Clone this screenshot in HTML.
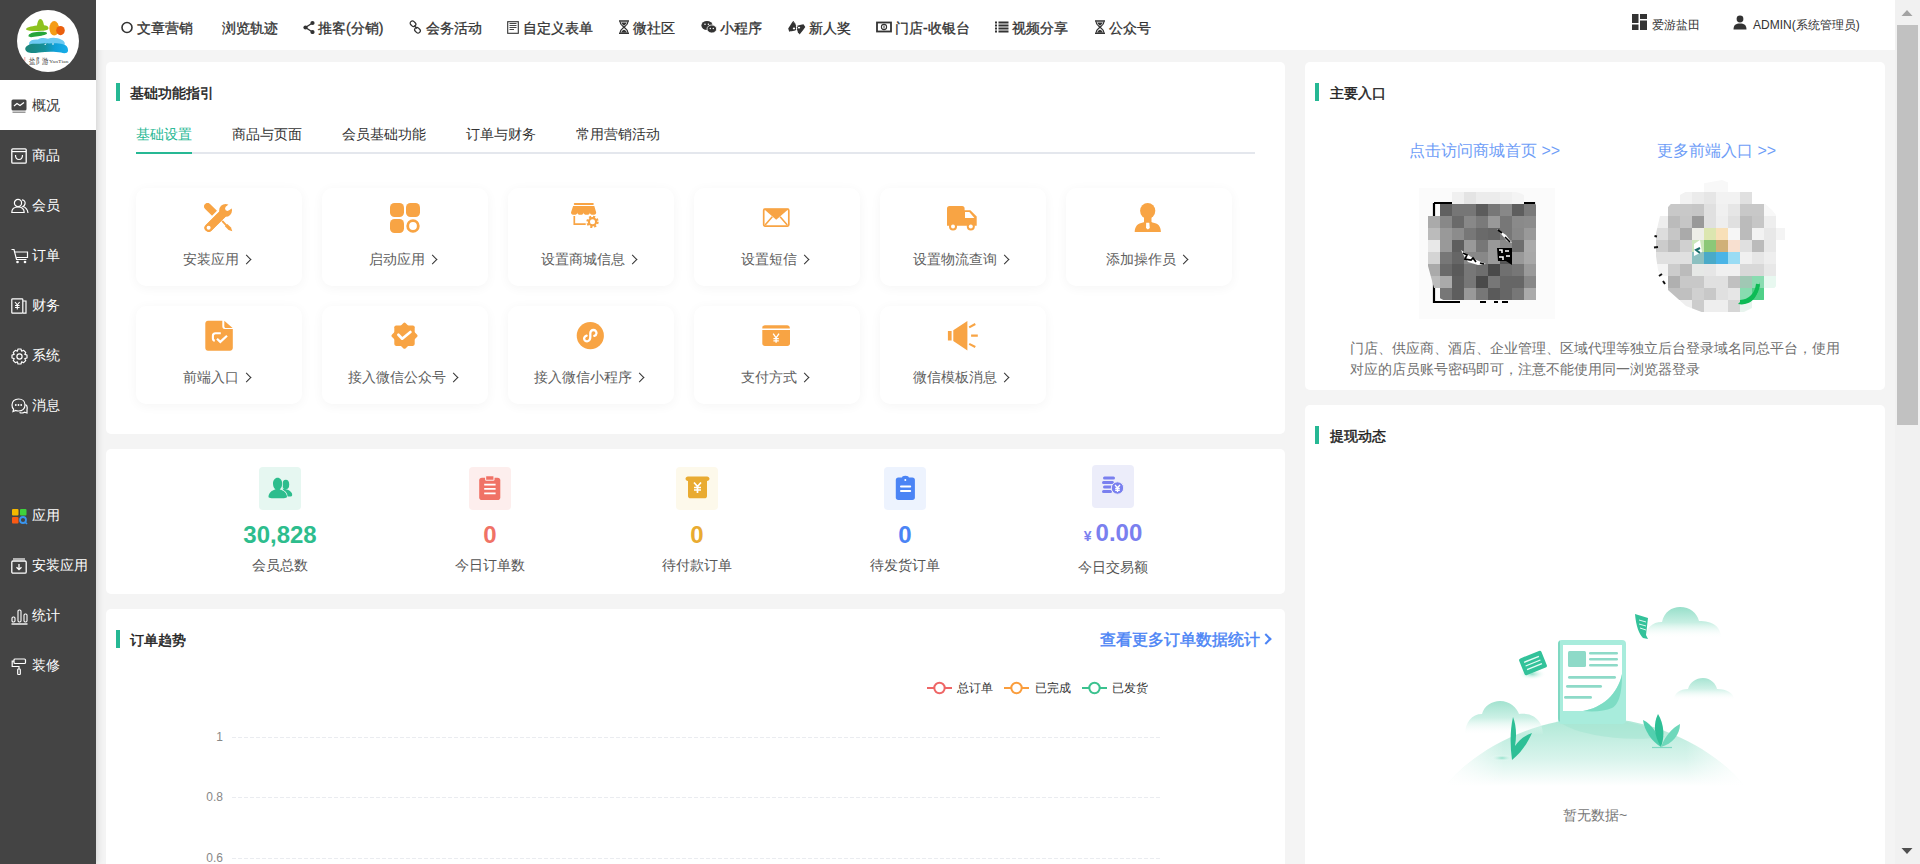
<!DOCTYPE html>
<html><head><meta charset="utf-8">
<style>
*{margin:0;padding:0;box-sizing:border-box}
html,body{width:1920px;height:864px;overflow:hidden;background:#f4f4f4;font-family:"Liberation Sans",sans-serif;color:#333}
.a{position:absolute}
#sb{position:absolute;left:0;top:0;width:96px;height:864px;background:#444;box-shadow:2px 0 6px rgba(0,0,0,.12);z-index:3}
#hd{position:absolute;left:96px;top:0;width:1799px;height:50px;background:#fff;z-index:4}
.mi{position:absolute;left:0;width:96px;height:50px;color:#fff;font-size:14px;line-height:50px}
.mi svg{position:absolute;left:11px;top:18px}
.mi span{position:absolute;left:32px;top:0}
.mi.on{background:#fff;color:#333}
.nv{position:absolute;top:0;height:50px;line-height:56px;font-size:14px;font-weight:normal;-webkit-text-stroke:0.3px #333;color:#333;white-space:nowrap}
.nv svg{position:absolute;top:21px}
.pn{position:absolute;background:#fff;border-radius:5px}
.ttl{position:absolute;font-size:14px;font-weight:normal;-webkit-text-stroke:0.45px #222;color:#222;line-height:18px;white-space:nowrap}
.bar{position:absolute;width:4px;height:18px;background:#26b894}
.card{position:absolute;width:166px;height:98px;background:#fff;border-radius:10px;box-shadow:0 2px 12px rgba(0,0,0,.045)}
.card svg{position:absolute;left:69px;top:15px}
.card .lb{position:absolute;left:0;right:6px;top:60px;text-align:center;font-size:14px;color:#606060;line-height:22px;white-space:nowrap}
.lb i{display:inline-block;width:7px;height:7px;border-right:1.6px solid #333;border-top:1.6px solid #333;transform:rotate(45deg);margin-left:4px;position:relative;top:-1px}
.tab{position:absolute;top:62px;font-size:14px;line-height:20px;white-space:nowrap}
.st{position:absolute;width:160px;text-align:center}
.st .ib{position:absolute;left:59px;top:0;width:42px;height:43px;border-radius:4px}
.st .num{position:absolute;left:0;right:0;top:53px;font-size:24px;font-weight:bold;line-height:30px}
.st .lab{position:absolute;left:0;right:0;top:88px;font-size:14px;color:#555;line-height:20px}
</style></head><body>

<div id="sb">
  <div class="a" style="left:17px;top:10px;width:62px;height:62px;border-radius:50%;background:#fff;overflow:hidden">
    <svg width="62" height="62" viewBox="0 0 62 62">
      <defs><linearGradient id="lg1" x1="0" y1="0" x2="1" y2="0"><stop offset="0" stop-color="#1d8579"/><stop offset=".45" stop-color="#16909a"/><stop offset=".7" stop-color="#10a0d8"/><stop offset="1" stop-color="#18aeea"/></linearGradient></defs>
      <path d="M9 19.5 C9 17.5 14 16.5 20 15.6 C20.5 12 21.5 9 23.3 9 C25.3 9 26.5 12 27 15.2 C29.5 15.5 31.5 16.2 31.5 18 C31.5 20 29 20.6 25 20.8 C19 21 12 21.5 9 19.5Z" fill="#8dc21f"/>
      <path d="M11.5 26 C11.5 23.5 16 22.2 22 21.8 C26 21.6 30 22 30 23.2 C30 24.5 26 25.5 21 26.3 C16 27.2 11.5 27.8 11.5 26Z" fill="#25a53a"/>
      <ellipse cx="37.2" cy="18.3" rx="4.8" ry="7.3" fill="#f59c16"/>
      <ellipse cx="43.5" cy="20.6" rx="4.3" ry="4.6" fill="#ea5f0e"/>
      <path d="M12 33 C13 30 17 29 21 29.5 C24 27.5 28 28 31 28.8 C35 27 41 27.5 45 30 C48 31.5 48.5 34 47 35.5 L12.5 35.8Z" fill="#6ccaf2"/>
      <path d="M8.2 39 C8.5 35.5 13 33.5 19 33.8 C24 34 28 33 32 33.5 C37 33 42 33.2 46 34.2 C50 35 51.2 38 51 41 C50.5 43.5 47 43.8 44 42.5 C38 41.5 30 41.5 22 42.5 C15 43.5 9 43.5 8.2 39Z" fill="url(#lg1)"/>
      <path d="M27 34.5 L29.5 33.2 L28.5 35Z M35 34.6 L36 32.8 L37 34.6Z" fill="#fff"/>
      <text x="12" y="53.5" font-size="8" fill="#2b2b2b" font-family="Liberation Serif" textLength="19.5" lengthAdjust="spacingAndGlyphs">盐阝游</text>
      <text x="32" y="53.2" font-size="5" fill="#444" font-family="Liberation Serif" textLength="19.5" lengthAdjust="spacingAndGlyphs">YanTian</text>
      <path d="M7.8 47 V51" stroke="#e66" stroke-width="1" opacity=".6"/>
    </svg>
  </div>
  <div class="mi on" style="top:80px"><svg width="16" height="16" viewBox="0 0 16 16"><rect x="0.5" y="1.5" width="15" height="11" rx="1.5" fill="#444"/><path d="M3 8 L6 5.5 L9 7.5 L13 4.5" stroke="#fff" stroke-width="1.2" fill="none"/><rect x="1.5" y="13.5" width="13" height="1.5" fill="#999"/></svg><span>概况</span></div>
  <div class="mi" style="top:130px"><svg width="16" height="16" viewBox="0 0 16 16"><rect x="0.8" y="0.8" width="14.4" height="14.4" rx="1" stroke="#fff" stroke-width="1.3" fill="none"/><path d="M1 3.6 H15" stroke="#fff" stroke-width="1.2"/><path d="M4.5 7 C4.5 13 11.5 13 11.5 7" stroke="#fff" stroke-width="1.2" fill="none"/></svg><span>商品</span></div>
  <div class="mi" style="top:180px"><svg width="18" height="16" viewBox="0 0 18 16"><circle cx="7" cy="5" r="3.6" stroke="#fff" stroke-width="1.2" fill="none"/><path d="M0.8 14.5 C0.8 10.5 3.5 9 7 9 C10.5 9 13.2 10.5 13.2 14.5 Z" stroke="#fff" stroke-width="1.2" fill="none"/><path d="M11 1.8 C13.5 2 14.5 4 14 6 C13.6 7.5 12.5 8.3 12 8.5 C14.5 9.3 16.5 11 17 15" stroke="#fff" stroke-width="1.2" fill="none"/></svg><span>会员</span></div>
  <div class="mi" style="top:230px"><svg width="18" height="16" viewBox="0 0 18 16"><path d="M0.5 1.5 H3 L5.5 11.5 H15.5" stroke="#fff" stroke-width="1.2" fill="none"/><path d="M4 4 H16.5 V9.5 H5.2" stroke="#fff" stroke-width="1.2" fill="none"/><circle cx="6.5" cy="14" r="1.3" fill="#fff"/><circle cx="14" cy="14" r="1.3" fill="#fff"/></svg><span>订单</span></div>
  <div class="mi" style="top:280px"><svg width="16" height="16" viewBox="0 0 16 16"><rect x="0.8" y="0.8" width="11" height="14.4" rx="0.8" stroke="#fff" stroke-width="1.2" fill="none"/><path d="M12 3 H15 V15.2 H12" stroke="#fff" stroke-width="1.2" fill="none"/><path d="M4 4 L6.3 6.8 L8.6 4 M6.3 6.8 V11.5 M4 7.5 H8.6 M4 9.5 H8.6" stroke="#fff" stroke-width="1.1" fill="none"/></svg><span>财务</span></div>
  <div class="mi" style="top:330px"><svg width="17" height="17" viewBox="0 0 17 17"><path d="M7 1 H10 L10.6 3.2 L12.6 2.3 L14.7 4.4 L13.8 6.4 L16 7 V10 L13.8 10.6 L14.7 12.6 L12.6 14.7 L10.6 13.8 L10 16 H7 L6.4 13.8 L4.4 14.7 L2.3 12.6 L3.2 10.6 L1 10 V7 L3.2 6.4 L2.3 4.4 L4.4 2.3 L6.4 3.2 Z" stroke="#fff" stroke-width="1.2" fill="none" stroke-linejoin="round"/><circle cx="8.5" cy="8.5" r="2.6" stroke="#fff" stroke-width="1.2" fill="none"/></svg><span>系统</span></div>
  <div class="mi" style="top:380px"><svg width="17" height="17" viewBox="0 0 17 17"><path d="M7.5 1 C11.5 1 14 3.5 14 7 C14 10.5 11.5 13 7.5 13 C6.5 13 5.5 12.8 4.8 12.5 L2 13.5 L2.6 11.2 C1.5 10.2 1 8.7 1 7 C1 3.5 3.5 1 7.5 1 Z" stroke="#fff" stroke-width="1.2" fill="none"/><circle cx="4.8" cy="7" r="0.9" fill="#fff"/><circle cx="7.5" cy="7" r="0.9" fill="#fff"/><circle cx="10.2" cy="7" r="0.9" fill="#fff"/><path d="M14.5 6.5 C16 7.5 16.5 9.5 16 11.5 L16 15 L13.5 14.2 C12 15 10 15.2 8.5 14.5" stroke="#fff" stroke-width="1.2" fill="none"/></svg><span>消息</span></div>
  <div class="mi" style="top:490px"><svg width="17" height="17" viewBox="0 0 17 17"><rect x="1" y="1" width="6.5" height="6.5" rx="1" fill="#f5b800"/><rect x="9" y="1" width="6.5" height="6.5" rx="1" fill="#3fd23c"/><rect x="1" y="9" width="6.5" height="6.5" rx="1" fill="#fa5a14"/><circle cx="12" cy="12" r="3" stroke="#3a96f0" stroke-width="1.8" fill="none"/><path d="M14 14 L16 16" stroke="#3a96f0" stroke-width="1.6"/></svg><span>应用</span></div>
  <div class="mi" style="top:540px"><svg width="16" height="16" viewBox="0 0 16 16"><rect x="0.8" y="3" width="14.4" height="12.2" rx="1.2" stroke="#fff" stroke-width="1.3" fill="none"/><path d="M2 1 H14" stroke="#fff" stroke-width="1.2"/><path d="M8 6 V11.5 M5.5 9.2 L8 11.7 L10.5 9.2" stroke="#fff" stroke-width="1.3" fill="none"/></svg><span>安装应用</span></div>
  <div class="mi" style="top:590px"><svg width="17" height="17" viewBox="0 0 17 17"><rect x="1" y="9" width="3" height="5" rx="1.2" stroke="#fff" stroke-width="1.1" fill="none"/><rect x="7" y="2" width="3" height="12" rx="1.2" stroke="#fff" stroke-width="1.1" fill="none"/><rect x="13" y="6" width="3" height="8" rx="1.2" stroke="#fff" stroke-width="1.1" fill="none"/><path d="M0.5 16 H16.5" stroke="#fff" stroke-width="1.4"/></svg><span>统计</span></div>
  <div class="mi" style="top:640px"><svg width="16" height="17" viewBox="0 0 16 17"><rect x="3" y="1" width="11.5" height="4.5" rx="1" stroke="#fff" stroke-width="1.2" fill="none"/><path d="M3 3.2 H1.2 V8.5 H8 V11" stroke="#fff" stroke-width="1.2" fill="none"/><rect x="6.7" y="11" width="2.6" height="5.5" rx="0.8" stroke="#fff" stroke-width="1.2" fill="none"/></svg><span>装修</span></div>
</div>

<div id="hd">
<div class="nv" style="left:41px">文章营销</div><svg class="a" style="left:25px;top:20px" width="12" height="14" viewBox="0 0 12 14"><circle cx="6" cy="7.5" r="5" stroke="#333" stroke-width="1.6" fill="none"/></svg>
<div class="nv" style="left:126px">浏览轨迹</div>
<div class="nv" style="left:222px">推客(分销)</div><svg class="a" style="left:207px;top:20px" width="12" height="14" viewBox="0 0 12 14"><circle cx="9.5" cy="3" r="2.1" fill="#333"/><circle cx="2.5" cy="7.5" r="2.1" fill="#333"/><circle cx="9.5" cy="12" r="2.1" fill="#333"/><path d="M9.5 3 L2.5 7.5 L9.5 12" stroke="#333" stroke-width="1.4" fill="none"/></svg>
<div class="nv" style="left:330px">会务活动</div><svg class="a" style="left:313px;top:20px" width="13" height="14" viewBox="0 0 13 14"><rect x="1" y="1.5" width="6" height="4.5" rx="2.2" transform="rotate(45 4 3.75)" stroke="#333" stroke-width="1.3" fill="none"/><rect x="5.5" y="8" width="6" height="4.5" rx="2.2" transform="rotate(45 8.5 10.25)" stroke="#333" stroke-width="1.3" fill="none"/><path d="M5 5.5 L8 8.5" stroke="#333" stroke-width="1.3"/></svg>
<div class="nv" style="left:427px">自定义表单</div><svg class="a" style="left:411px;top:20px" width="12" height="14" viewBox="0 0 12 14"><rect x="0.7" y="1.7" width="10.6" height="11.6" stroke="#333" stroke-width="1.1" fill="none"/><path d="M2.5 3.5 H9.5 M2.5 5.5 H9.5 M2.5 7.5 H9.5 M2.5 9.5 H7" stroke="#333" stroke-width="0.9"/></svg>
<div class="nv" style="left:537px">微社区</div><svg class="a" style="left:522px;top:20px" width="12" height="14" viewBox="0 0 12 14"><path d="M1 1 H11 M1 13.5 H11" stroke="#333" stroke-width="1.6"/><path d="M2 1.5 C2 5 5 6 6 7.2 C7 6 10 5 10 1.5 M2 13 C2 9 5 8.5 6 7.2 C7 8.5 10 9 10 13" stroke="#333" stroke-width="1.2" fill="none"/><path d="M3 12.8 C4 10.5 5.2 10 6 9.8 C6.8 10 8 10.5 9 12.8Z M3.2 2.5 H8.8 C8 4.5 6.8 5 6 5.8 C5.2 5 4 4.5 3.2 2.5Z" fill="#333"/></svg>
<div class="nv" style="left:624px">小程序</div><svg class="a" style="left:605px;top:20px" width="16" height="14" viewBox="0 0 16 14"><ellipse cx="6" cy="5.5" rx="5.6" ry="4.6" fill="#333"/><ellipse cx="10.8" cy="9" rx="4.8" ry="4" fill="#333" stroke="#fff" stroke-width="0.8"/><circle cx="4" cy="4.2" r="0.8" fill="#fff"/><circle cx="7.4" cy="4.2" r="0.8" fill="#fff"/><circle cx="9.3" cy="8.5" r="0.7" fill="#fff"/><circle cx="12.3" cy="8.5" r="0.7" fill="#fff"/></svg>
<div class="nv" style="left:713px">新人奖</div><svg class="a" style="left:691px;top:20px" width="19" height="15" viewBox="0 0 19 15"><path d="M1.2 8.6 C2.5 6.5 3.8 4.5 5 2.6 L6.2 1.1 L7 1.6 L6.6 2.6 L8 2.4 L7.8 3.6 L8.8 3.8 L8.5 5 L9.2 5.4 L8.8 6.6 L9.3 7.2 L8.9 8.6 L9.2 9.4 L8.3 10.4 C7 11 5 11 3.5 11.2 L2.2 11.8Z" fill="#333"/><path d="M18.3 7 C17.6 6 17 5 16.5 4.3 C15 4.6 13 4.9 11 5.4 L10.2 5.8 L10.6 6.8 L9.8 7.4 L10.4 8.4 L9.8 9.2 L10.5 10.2 L10.1 11 L11 11.8 L10.8 12.8 L12 13.4 L12.6 14.6 C13.8 13 15 11.5 16 10.2Z" fill="#333"/><ellipse cx="7" cy="8.4" rx="1.2" ry="0.9" fill="#fff"/><ellipse cx="12" cy="7.6" rx="1.2" ry="0.9" fill="#fff"/></svg>
<div class="nv" style="left:799px">门店-收银台</div><svg class="a" style="left:780px;top:20px" width="16" height="14" viewBox="0 0 16 14"><rect x="1" y="2.5" width="14" height="9" stroke="#333" stroke-width="1.8" fill="none"/><circle cx="8" cy="7" r="2.6" stroke="#333" stroke-width="1.1" fill="none"/><path d="M8 5.5 V8.5" stroke="#333" stroke-width="1"/></svg>
<div class="nv" style="left:916px">视频分享</div><svg class="a" style="left:899px;top:20px" width="14" height="14" viewBox="0 0 14 14"><path d="M0 2.5 H2 M0 5.5 H2 M0 8.5 H2 M0 11.5 H2 M3.5 2.5 H13.5 M3.5 5.5 H13.5 M3.5 8.5 H13.5 M3.5 11.5 H13.5" stroke="#333" stroke-width="1.9"/></svg>
<div class="nv" style="left:1013px">公众号</div><svg class="a" style="left:998px;top:20px" width="12" height="14" viewBox="0 0 12 14"><path d="M1 1 H11 M1 13.5 H11" stroke="#333" stroke-width="1.6"/><path d="M2 1.5 C2 5 5 6 6 7.2 C7 6 10 5 10 1.5 M2 13 C2 9 5 8.5 6 7.2 C7 8.5 10 9 10 13" stroke="#333" stroke-width="1.2" fill="none"/><path d="M3 12.8 C4 10.5 5.2 10 6 9.8 C6.8 10 8 10.5 9 12.8Z M3.2 2.5 H8.8 C8 4.5 6.8 5 6 5.8 C5.2 5 4 4.5 3.2 2.5Z" fill="#333"/></svg>
<svg class="a" style="left:1536px;top:14px" width="15" height="16" viewBox="0 0 15 16"><rect x="0" y="0" width="6.5" height="9" fill="#333"/><rect x="0" y="10.5" width="6.5" height="5.5" fill="#333"/><rect x="8" y="0" width="7" height="5" fill="#333"/><rect x="8" y="6.5" width="7" height="9.5" fill="#333"/></svg>
<div class="a" style="left:1556px;top:0;line-height:50px;font-size:12px;color:#333">爱游盐田</div>
<svg class="a" style="left:1637px;top:15px" width="14" height="15" viewBox="0 0 14 15"><circle cx="7" cy="4" r="3.4" fill="#333"/><path d="M0.5 14.5 C0.5 10 3 8.5 7 8.5 C11 8.5 13.5 10 13.5 14.5Z" fill="#333"/></svg>
<div class="a" style="left:1657px;top:0;line-height:50px;font-size:12px;color:#333">ADMIN(系统管理员)</div>
</div>

<!-- left panel 1 -->
<div class="pn" style="left:106px;top:62px;width:1179px;height:372px">
  <div class="bar" style="left:10px;top:21px"></div>
  <div class="ttl" style="left:24px;top:22px">基础功能指引</div>
  <div class="tab" style="left:30px;color:#26b894">基础设置</div>
  <div class="tab" style="left:126px;color:#333">商品与页面</div>
  <div class="tab" style="left:236px;color:#333">会员基础功能</div>
  <div class="tab" style="left:360px;color:#333">订单与财务</div>
  <div class="tab" style="left:470px;color:#333">常用营销活动</div>
  <div class="a" style="left:30px;top:90px;width:1119px;height:2px;background:#e4e7ed"></div>
  <div class="a" style="left:30px;top:90px;width:56px;height:2px;background:#26b894"></div>
  <div class="card" style="left:30px;top:126px"><svg class="a" style="left:68px;top:15px" width="30" height="30" viewBox="0 0 30 30"><path d="M6.06 1.01 L12.96 7.81 L8.04 12.79 L1.14 5.99 A3.5 3.5 0 0 1 6.06 1.01Z" fill="#f8a444"/><path d="M18.4 18.2 L22.6 22.6" stroke="#f8a444" stroke-width="1.9" stroke-linecap="round"/><path d="M20.9 23.3 L23.3 20.9 L27 24.4 L28.3 28.2 L24.6 27Z" fill="#f8a444"/><g stroke="#fff" stroke-width="1.1" paint-order="stroke"><path d="M1.79 21.95 L16.19 7.75 L21.81 13.45 L7.41 27.65 A4 4 0 0 1 1.79 21.95Z" fill="#f8a444"/></g><circle cx="21.6" cy="7.4" r="6.4" fill="#f8a444"/><path d="M1.79 21.95 L16.19 7.75 L21.81 13.45 L7.41 27.65 A4 4 0 0 1 1.79 21.95Z" fill="#f8a444"/><circle cx="23.4" cy="5.6" r="2.3" fill="#fff"/><path d="M21.8 4 L25.6 0.2 L29.6 4.2 L25 7.2Z" fill="#fff"/><circle cx="4.6" cy="24.7" r="2" fill="#fff"/></svg><div class="lb">安装应用<i></i></div></div>
  <div class="card" style="left:216px;top:126px"><svg class="a" style="left:68px;top:15px" width="30" height="30" viewBox="0 0 30 30"><rect x="0" y="0" width="14" height="14" rx="4.5" fill="#f8a444"/><rect x="16" y="0" width="14" height="14" rx="4.5" fill="#f8a444"/><rect x="0" y="16" width="14" height="14" rx="4.5" fill="#f8a444"/><circle cx="23" cy="23" r="5.3" stroke="#f8a444" stroke-width="2.8" fill="none"/></svg><div class="lb">启动应用<i></i></div></div>
  <div class="card" style="left:402px;top:126px"><svg class="a" style="left:62px;top:14px" width="30" height="30" viewBox="0 0 30 30"><rect x="3.8" y="1" width="20" height="1.9" rx="0.9" fill="#f8a444"/><path d="M3.1 4.1 H24.3 L26.2 10.5 A3.15 2.3 0 0 1 19.9 10.5 A3.15 2.3 0 0 1 13.6 10.5 A3.15 2.3 0 0 1 7.3 10.5 A3.15 2.3 0 0 1 1 10.5Z" fill="#f8a444"/><path d="M4.3 14 V22.1 H15.7" stroke="#f8a444" stroke-width="1.7" fill="none"/><circle cx="22.5" cy="19.8" r="4.7" fill="#f8a444"/><circle cx="22.5" cy="19.8" r="5.1" stroke="#f8a444" stroke-width="2.2" stroke-dasharray="2.1 1.9" fill="none"/><circle cx="22.5" cy="19.8" r="2.5" fill="#fff"/></svg><div class="lb">设置商城信息<i></i></div></div>
  <div class="card" style="left:588px;top:126px"><svg class="a" style="left:68px;top:20px" width="29" height="20" viewBox="0 0 29 20"><rect x="1.7" y="1.1" width="25.1" height="17" rx="1.3" stroke="#f8a444" stroke-width="1.7" fill="none"/><path d="M1.5 0.8 H27 L14.2 11.8Z" fill="#f8a444"/><path d="M3.1 17 L10.3 8.8 M25.3 17 L18.1 8.8" stroke="#f8a444" stroke-width="1.6"/></svg><div class="lb">设置短信<i></i></div></div>
  <div class="card" style="left:774px;top:126px"><svg class="a" style="left:66px;top:17px" width="32" height="26" viewBox="0 0 32 26"><path d="M1 20.7 V3.6 A2.5 2.5 0 0 1 3.5 1.1 H16.1 A2.5 2.5 0 0 1 18.6 3.6 V5.3 H24.4 L30.7 11.5 V20.7Z" fill="#f8a444"/><path d="M19 7.1 H23.3 L28.4 13 H19Z" fill="#fff"/><circle cx="7" cy="21.4" r="4" fill="#f8a444"/><circle cx="7" cy="21.4" r="2" fill="#fff"/><circle cx="24.8" cy="21.4" r="4" fill="#f8a444"/><circle cx="24.8" cy="21.4" r="2" fill="#fff"/></svg><div class="lb">设置物流查询<i></i></div></div>
  <div class="card" style="left:960px;top:126px"><svg class="a" style="left:67px;top:14px" width="30" height="32" viewBox="0 0 30 32"><ellipse cx="14.7" cy="8.8" rx="7.6" ry="7.9" fill="#f8a444"/><path d="M11 14 H18.5 V21 H11Z" fill="#f8a444"/><path d="M1.7 30.1 C1.7 24 5 21.2 10 20.4 L12 19.8 H17.5 L19.5 20.4 C25 21.2 27.9 24 27.9 30.1Z" fill="#f8a444"/><path d="M13.2 20.8 H16.3 L16.8 26 L14.9 27.4 L13 26Z" fill="#fff"/></svg><div class="lb">添加操作员<i></i></div></div>
  <div class="card" style="left:30px;top:244px"><svg class="a" style="left:69px;top:14px" width="29" height="32" viewBox="0 0 29 32"><path d="M3 0.8 H17.3 V6 C17.3 7.8 18 9.1 19.8 9.1 H27.8 V28 C27.8 29.5 26.5 30.7 25 30.7 H3 C1.5 30.7 0.3 29.5 0.3 28 V3.5 C0.3 2 1.5 0.8 3 0.8Z" fill="#f8a444"/><path d="M19.3 0.8 L27.6 7.9 H20.8 C20 7.9 19.3 7.2 19.3 6.4Z" fill="#f8a444"/><path d="M15.8 13.2 H10.5 C8.8 13.2 7.9 14.2 7.9 15.8 V18.5 C7.9 19.8 8.5 20.6 9.8 20.8" stroke="#fff" stroke-width="2.1" fill="none"/><path d="M12 18.8 L15.3 21.9 L22 15.7" stroke="#fff" stroke-width="2.2" fill="none"/></svg><div class="lb">前端入口<i></i></div></div>
  <div class="card" style="left:216px;top:244px"><svg class="a" style="left:68px;top:16px" width="30" height="30" viewBox="0 0 30 30"><rect x="4.3" y="3.5" width="20.4" height="20.4" rx="1.8" fill="#f8a444"/><rect x="4.8" y="4" width="19.4" height="19.4" rx="1.8" transform="rotate(45 14.5 13.7)" fill="#f8a444"/><path d="M8.4 12.8 L12.2 16.7 L20.4 10" stroke="#fff" stroke-width="2.7" fill="none" stroke-linecap="round" stroke-linejoin="round"/></svg><div class="lb">接入微信公众号<i></i></div></div>
  <div class="card" style="left:402px;top:244px"><svg class="a" style="left:68px;top:16px" width="28" height="28" viewBox="0 0 28 28"><circle cx="14.3" cy="13.7" r="13.6" fill="#f8a444"/><path d="M10.6 13.6 C8.4 14.3 7.5 16.3 8.5 18 C9.6 19.8 12.5 19.8 13.6 17.8 C14.2 16.8 14.3 16 14.3 15 V11.2 C14.3 9.4 15.7 8 17.4 8 C19.3 8 20.6 9.5 20.5 11.2 C20.4 12.6 19.5 13.5 18.3 13.9" stroke="#fff" stroke-width="2.3" fill="none" stroke-linecap="round"/></svg><div class="lb">接入微信小程序<i></i></div></div>
  <div class="card" style="left:588px;top:244px"><svg class="a" style="left:68px;top:19px" width="29" height="22" viewBox="0 0 29 22"><path d="M0.3 3.6 V2.7 C0.3 1.2 1.5 0.2 3 0.2 H25.1 C26.6 0.2 27.8 1.2 27.8 2.7 V3.6Z" fill="#f8a444"/><path d="M0.3 5.1 H28 V18.4 C28 19.8 26.8 20.9 25.4 20.9 H2.9 C1.5 20.9 0.3 19.8 0.3 18.4Z" fill="#f8a444"/><path d="M11.2 8.7 L14.1 12.9 L17 8.7 M14.1 12.9 V17.7 M11.4 13.6 H16.8 M11.4 15.8 H16.8" stroke="#fff" stroke-width="1.35" fill="none"/></svg><div class="lb">支付方式<i></i></div></div>
  <div class="card" style="left:774px;top:244px"><svg class="a" style="left:66px;top:14px" width="33" height="32" viewBox="0 0 33 32"><rect x="1.9" y="11" width="3.7" height="9.5" fill="#f8a444"/><path d="M7.3 10.3 L21.4 1 V30.4 L7.3 20.9Z" fill="#f8a444"/><path d="M23.2 7.3 L29.3 4 M25.1 15.6 H31.8 M23.2 23.9 L29.3 27" stroke="#f8a444" stroke-width="2.1"/></svg><div class="lb">微信模板消息<i></i></div></div>
</div>
<!-- stats -->
<div class="pn" style="left:106px;top:449px;width:1179px;height:145px">
  <div class="st" style="left:94px;top:18px;height:130px"><div class="ib" style="background:#e6f7f1"><svg class="a" style="left:9px;top:9px" width="26" height="24" viewBox="0 0 26 24"><ellipse cx="17.8" cy="8.4" rx="3.4" ry="4.7" fill="#2dbd8d"/><path d="M14.5 12.6 C19.5 13.2 24.2 15.3 24.2 19 C24.2 20.2 23.2 20.6 21.5 20.6 L18.5 20.6Z" fill="#2dbd8d"/><g stroke="#e6f7f1" stroke-width="1.3" paint-order="stroke"><path d="M0.5 21 C0.5 16.5 4 14.2 7.5 13.4 C5.8 12.3 5 10 5 7.6 C5 4.2 7 1.8 9.6 1.8 C12.2 1.8 14.2 4.2 14.2 7.6 C14.2 10 13.4 12.3 11.7 13.4 C15.5 14.2 19 16.5 19 21 C19 22 17 22.3 9.7 22.3 C2.5 22.3 0.5 22 0.5 21Z" fill="#2dbd8d"/></g></svg></div><div class="num" style="color:#2dbd8d">30,828</div><div class="lab" style="">会员总数</div></div>
  <div class="st" style="left:304px;top:18px;height:130px"><div class="ib" style="background:#fdeeed"><svg class="a" style="left:10px;top:8px" width="22" height="26" viewBox="0 0 22 26"><rect x="0.2" y="2.7" width="21.1" height="22.4" rx="2.8" fill="#f07266"/><rect x="6.6" y="0.6" width="8.4" height="4.6" rx="0.8" fill="#f07266" stroke="#fdeeed" stroke-width="1.1"/><path d="M5.2 9.7 H16.6 M5.2 13.9 H16.6 M5.2 18.3 H16.6" stroke="#fff" stroke-width="1.7"/></svg></div><div class="num" style="color:#f07266">0</div><div class="lab" style="">今日订单数</div></div>
  <div class="st" style="left:511px;top:18px;height:130px"><div class="ib" style="background:#fdf9eb"><svg class="a" style="left:9px;top:9px" width="25" height="23" viewBox="0 0 25 23"><path d="M3 0.5 H22 C23.5 0.5 24.5 1.5 24.5 2.8 C24.5 4 23.5 5 22 5 V20 C22 21.5 21 22.3 19.5 22.3 H5.5 C4 22.3 3 21.5 3 20 V5 C1.5 5 0.5 4 0.5 2.8 C0.5 1.5 1.5 0.5 3 0.5Z" fill="#e9ab31"/><path d="M9 6.5 L12.5 10.5 L16 6.5 M12.5 10.5 V17 M9 11.5 H16 M9 14 H16" stroke="#fff" stroke-width="1.7" fill="none"/></svg></div><div class="num" style="color:#e9ab31">0</div><div class="lab" style="">待付款订单</div></div>
  <div class="st" style="left:719px;top:18px;height:130px"><div class="ib" style="background:#edf3fe"><svg class="a" style="left:10px;top:8px" width="22" height="26" viewBox="0 0 22 26"><rect x="1.8" y="2.4" width="19.1" height="22.5" rx="2.6" fill="#4b84f5"/><ellipse cx="11.4" cy="3" rx="3.5" ry="2.2" fill="#4b84f5"/><circle cx="11.3" cy="4.9" r="1" fill="#fff"/><path d="M7 11.4 H16.2 M7 15.9 H16.2" stroke="#fff" stroke-width="2" stroke-linecap="round"/></svg></div><div class="num" style="color:#4b84f5">0</div><div class="lab" style="">待发货订单</div></div>
  <div class="st" style="left:927px;top:16px;height:130px"><div class="ib" style="background:#ecedfa"><svg class="a" style="left:9px;top:9px" width="24" height="22" viewBox="0 0 24 22"><rect x="2" y="2.5" width="12" height="3" rx="1.5" fill="#7a80ef"/><rect x="1" y="7" width="12" height="3" rx="1.5" fill="#7a80ef"/><rect x="2" y="11.5" width="9" height="3" rx="1.5" fill="#7a80ef"/><rect x="1" y="16" width="10" height="3" rx="1.5" fill="#7a80ef"/><circle cx="16.5" cy="14" r="6.2" fill="#7a80ef" stroke="#ecedfa" stroke-width="1"/><path d="M14 11 L16.5 13.8 L19 11 M16.5 13.8 V18 M14.2 14.5 H18.8 M14.2 16.3 H18.8" stroke="#fff" stroke-width="1.3" fill="none"/></svg></div><div class="num" style="color:#7a80ef"><span style="font-size:14px;margin-right:4px">¥</span>0.00</div><div class="lab" style="top:92px">今日交易额</div></div>
</div>
<!-- trend -->
<div class="pn" style="left:106px;top:609px;width:1179px;height:300px">
  <div class="bar" style="left:10px;top:21px"></div>
  <div class="ttl" style="left:24px;top:22px">订单趋势</div>
  <div class="a" style="left:994px;top:20px;font-size:16px;font-weight:normal;-webkit-text-stroke:0.45px #4b84f5;color:#4b84f5;line-height:22px;white-space:nowrap">查看更多订单数据统计<i style="display:inline-block;width:8px;height:8px;border-right:2.2px solid #4b84f5;border-top:2.2px solid #4b84f5;transform:rotate(45deg);margin-left:2px;position:relative;top:-2px"></i></div>
  <svg class="a" style="left:821px;top:72px" width="25" height="14" viewBox="0 0 25 14"><path d="M0 7 H25" stroke="#ee6666" stroke-width="2"/><circle cx="12.5" cy="7" r="5.2" fill="#fff" stroke="#ee6666" stroke-width="2"/></svg>
  <div class="a" style="left:851px;top:70px;font-size:12px;line-height:18px;color:#333">总订单</div>
  <svg class="a" style="left:898px;top:72px" width="25" height="14" viewBox="0 0 25 14"><path d="M0 7 H25" stroke="#fa9d3c" stroke-width="2"/><circle cx="12.5" cy="7" r="5.2" fill="#fff" stroke="#fa9d3c" stroke-width="2"/></svg>
  <div class="a" style="left:929px;top:70px;font-size:12px;line-height:18px;color:#333">已完成</div>
  <svg class="a" style="left:976px;top:72px" width="25" height="14" viewBox="0 0 25 14"><path d="M0 7 H25" stroke="#3bc28f" stroke-width="2"/><circle cx="12.5" cy="7" r="5.2" fill="#fff" stroke="#3bc28f" stroke-width="2"/></svg>
  <div class="a" style="left:1006px;top:70px;font-size:12px;line-height:18px;color:#333">已发货</div>
  <div class="a" style="left:54px;width:63px;text-align:right;top:120px;font-size:12px;line-height:16px;color:#888">1</div>
  <div class="a" style="left:126px;top:128px;width:928px;height:1px;background:repeating-linear-gradient(90deg,#eaecf0 0 4px,transparent 4px 6px)"></div>
  <div class="a" style="left:54px;width:63px;text-align:right;top:180px;font-size:12px;line-height:16px;color:#888">0.8</div>
  <div class="a" style="left:126px;top:188px;width:928px;height:1px;background:repeating-linear-gradient(90deg,#eaecf0 0 4px,transparent 4px 6px)"></div>
  <div class="a" style="left:54px;width:63px;text-align:right;top:241px;font-size:12px;line-height:16px;color:#888">0.6</div>
  <div class="a" style="left:126px;top:249px;width:928px;height:1px;background:repeating-linear-gradient(90deg,#eaecf0 0 4px,transparent 4px 6px)"></div>
</div>
<!-- right 1 -->
<div class="pn" style="left:1305px;top:62px;width:580px;height:328px">
  <div class="bar" style="left:10px;top:21px"></div>
  <div class="ttl" style="left:25px;top:22px">主要入口</div>
  <div class="a" style="left:104px;top:78px;font-size:16px;line-height:22px;color:#6e9df7;white-space:nowrap">点击访问商城首页 &gt;&gt;</div>
  <div class="a" style="left:352px;top:78px;font-size:16px;line-height:22px;color:#6e9df7;white-space:nowrap">更多前端入口 &gt;&gt;</div>
<div class="a" style="left:114px;top:126px;width:136px;height:131px;background:#fbfbfb"></div>
<svg class="a" style="left:115px;top:124px" width="124" height="124" viewBox="-8 -6 124 124">
<path d="M6 11 V110 H32 M6 11 H24 M84 11 H106 V24 M52 110 H58 M66 110 H70 M74 110 H80" stroke="#000" stroke-width="2.2" fill="none"/>
<g clip-path="url(#qc1)"><rect x="24" y="0" width="12" height="12" fill="#f0f0f0"/><rect x="36" y="0" width="12" height="12" fill="#e4e4e4"/><rect x="48" y="0" width="12" height="12" fill="#ececec"/><rect x="60" y="0" width="12" height="12" fill="#ececec"/><rect x="72" y="0" width="12" height="12" fill="#f0f0f0"/><rect x="84" y="0" width="12" height="12" fill="#f4f4f4"/><rect x="12" y="12" width="12" height="12" fill="#606060"/><rect x="24" y="12" width="12" height="12" fill="#767676"/><rect x="36" y="12" width="12" height="12" fill="#767676"/><rect x="48" y="12" width="12" height="12" fill="#5c5c5c"/><rect x="60" y="12" width="12" height="12" fill="#777777"/><rect x="72" y="12" width="12" height="12" fill="#888888"/><rect x="84" y="12" width="12" height="12" fill="#5e5e5e"/><rect x="96" y="12" width="12" height="12" fill="#7a7a7a"/><rect x="0" y="24" width="12" height="12" fill="#aaaaaa"/><rect x="12" y="24" width="12" height="12" fill="#888888"/><rect x="24" y="24" width="12" height="12" fill="#6a6a6a"/><rect x="36" y="24" width="12" height="12" fill="#888888"/><rect x="48" y="24" width="12" height="12" fill="#7a7a7a"/><rect x="60" y="24" width="12" height="12" fill="#999999"/><rect x="72" y="24" width="12" height="12" fill="#777777"/><rect x="84" y="24" width="12" height="12" fill="#8a8a8a"/><rect x="96" y="24" width="12" height="12" fill="#8c8c8c"/><rect x="0" y="36" width="12" height="12" fill="#bbbbbb"/><rect x="12" y="36" width="12" height="12" fill="#999999"/><rect x="24" y="36" width="12" height="12" fill="#8c8c8c"/><rect x="36" y="36" width="12" height="12" fill="#777777"/><rect x="48" y="36" width="12" height="12" fill="#6a6a6a"/><rect x="60" y="36" width="12" height="12" fill="#666666"/><rect x="72" y="36" width="12" height="12" fill="#777777"/><rect x="84" y="36" width="12" height="12" fill="#888888"/><rect x="96" y="36" width="12" height="12" fill="#999999"/><rect x="0" y="48" width="12" height="12" fill="#e8e8e8"/><rect x="12" y="48" width="12" height="12" fill="#999999"/><rect x="24" y="48" width="12" height="12" fill="#5e5e5e"/><rect x="36" y="48" width="12" height="12" fill="#999999"/><rect x="48" y="48" width="12" height="12" fill="#777777"/><rect x="60" y="48" width="12" height="12" fill="#999999"/><rect x="72" y="48" width="12" height="12" fill="#888888"/><rect x="84" y="48" width="12" height="12" fill="#6e6e6e"/><rect x="96" y="48" width="12" height="12" fill="#aaaaaa"/><rect x="0" y="60" width="12" height="12" fill="#d4d4d4"/><rect x="12" y="60" width="12" height="12" fill="#777777"/><rect x="24" y="60" width="12" height="12" fill="#666666"/><rect x="36" y="60" width="12" height="12" fill="#888888"/><rect x="48" y="60" width="12" height="12" fill="#888888"/><rect x="60" y="60" width="12" height="12" fill="#999999"/><rect x="72" y="60" width="12" height="12" fill="#555555"/><rect x="84" y="60" width="12" height="12" fill="#999999"/><rect x="96" y="60" width="12" height="12" fill="#a8a8a8"/><rect x="0" y="72" width="12" height="12" fill="#aaaaaa"/><rect x="12" y="72" width="12" height="12" fill="#6a6a6a"/><rect x="24" y="72" width="12" height="12" fill="#5a5a5a"/><rect x="36" y="72" width="12" height="12" fill="#777777"/><rect x="48" y="72" width="12" height="12" fill="#6e6e6e"/><rect x="60" y="72" width="12" height="12" fill="#4a4a4a"/><rect x="72" y="72" width="12" height="12" fill="#707070"/><rect x="84" y="72" width="12" height="12" fill="#777777"/><rect x="96" y="72" width="12" height="12" fill="#9a9a9a"/><rect x="0" y="84" width="12" height="12" fill="#bbbbbb"/><rect x="12" y="84" width="12" height="12" fill="#aaaaaa"/><rect x="24" y="84" width="12" height="12" fill="#5e5e5e"/><rect x="36" y="84" width="12" height="12" fill="#777777"/><rect x="48" y="84" width="12" height="12" fill="#4a4a4a"/><rect x="60" y="84" width="12" height="12" fill="#777777"/><rect x="72" y="84" width="12" height="12" fill="#666666"/><rect x="84" y="84" width="12" height="12" fill="#666666"/><rect x="96" y="84" width="12" height="12" fill="#888888"/><rect x="12" y="96" width="12" height="12" fill="#777777"/><rect x="24" y="96" width="12" height="12" fill="#5e5e5e"/><rect x="36" y="96" width="12" height="12" fill="#999999"/><rect x="48" y="96" width="12" height="12" fill="#777777"/><rect x="60" y="96" width="12" height="12" fill="#5a5a5a"/><rect x="72" y="96" width="12" height="12" fill="#666666"/><rect x="84" y="96" width="12" height="12" fill="#777777"/><rect x="96" y="96" width="12" height="12" fill="#aaaaaa"/></g>
<clipPath id="qc1"><path d="M24 0 H88 C96 2 102 6 104 10 L110 14 V108 C106 112 100 110 96 110 H22 C14 108 8 106 6 96 L0 74 V10 C2 8 8 6 12 12Z"/></clipPath>
<path d="M33 58 L46 67 L58 72 L50 73 L40 70 L36 64Z" fill="#fff"/><path d="M35 61 L39 63 L37 67 L43 68 L45 66 L48 70 M52 71 L56 72" stroke="#000" stroke-width="1.7" fill="none"/>
<path d="M69 37 L78 43 L84 51 L79 49Z" fill="#fff"/><path d="M70 38 L74 41 M77 45 L82 50" stroke="#000" stroke-width="1.6"/>
<path d="M69 56 H84 V73 L78 69 H70Z" fill="#000"/><path d="M71 58 H74 V61 M77 59 H81 M71 65 H75 V68 M78 64 H82" stroke="#fff" stroke-width="1.5"/>
</svg>
<svg class="a" style="left:340px;top:118px" width="140" height="140" viewBox="-11 0 140 140">
<g clip-path="url(#qc2)"><rect x="48" y="0" width="12" height="12" fill="#f8f8f8"/><rect x="60" y="0" width="12" height="12" fill="#f8f8f8"/><rect x="24" y="12" width="12" height="12" fill="#f2f2f2"/><rect x="36" y="12" width="12" height="12" fill="#ebebeb"/><rect x="48" y="12" width="12" height="12" fill="#e6e6e6"/><rect x="60" y="12" width="12" height="12" fill="#f2f2f2"/><rect x="72" y="12" width="12" height="12" fill="#f2f2f2"/><rect x="84" y="12" width="12" height="12" fill="#e0e0e0"/><rect x="12" y="24" width="12" height="12" fill="#c8c8c8"/><rect x="24" y="24" width="12" height="12" fill="#c8c8c8"/><rect x="36" y="24" width="12" height="12" fill="#c6c6c6"/><rect x="48" y="24" width="12" height="12" fill="#e0e0e0"/><rect x="60" y="24" width="12" height="12" fill="#f0f0f0"/><rect x="72" y="24" width="12" height="12" fill="#e6e6e6"/><rect x="84" y="24" width="12" height="12" fill="#c8c8c8"/><rect x="96" y="24" width="12" height="12" fill="#c8c8c8"/><rect x="108" y="24" width="12" height="12" fill="#f8f8f8"/><rect x="0" y="36" width="12" height="12" fill="#eeeeee"/><rect x="12" y="36" width="12" height="12" fill="#bbbbbb"/><rect x="24" y="36" width="12" height="12" fill="#c6c6c6"/><rect x="36" y="36" width="12" height="12" fill="#999999"/><rect x="48" y="36" width="12" height="12" fill="#e0e0e0"/><rect x="60" y="36" width="12" height="12" fill="#eeeeee"/><rect x="72" y="36" width="12" height="12" fill="#e0e0e0"/><rect x="84" y="36" width="12" height="12" fill="#bbbbbb"/><rect x="96" y="36" width="12" height="12" fill="#c6c6c6"/><rect x="108" y="36" width="12" height="12" fill="#eeeeee"/><rect x="0" y="48" width="12" height="12" fill="#dddddd"/><rect x="12" y="48" width="12" height="12" fill="#c6c6c6"/><rect x="24" y="48" width="12" height="12" fill="#aaaaaa"/><rect x="36" y="48" width="12" height="12" fill="#eeeee8"/><rect x="48" y="48" width="12" height="12" fill="#dce6b0"/><rect x="60" y="48" width="12" height="12" fill="#f8e0b8"/><rect x="72" y="48" width="12" height="12" fill="#f6f6f6"/><rect x="84" y="48" width="12" height="12" fill="#bbbbbb"/><rect x="96" y="48" width="12" height="12" fill="#f2f2f2"/><rect x="108" y="48" width="12" height="12" fill="#e8e8e8"/><rect x="120" y="48" width="12" height="12" fill="#f4f4f4"/><rect x="0" y="60" width="12" height="12" fill="#cccccc"/><rect x="12" y="60" width="12" height="12" fill="#bbbbbb"/><rect x="24" y="60" width="12" height="12" fill="#d0d0d0"/><rect x="36" y="60" width="12" height="12" fill="#cce6bb"/><rect x="48" y="60" width="12" height="12" fill="#8cc878"/><rect x="60" y="60" width="12" height="12" fill="#d0b078"/><rect x="72" y="60" width="12" height="12" fill="#f8e0d0"/><rect x="84" y="60" width="12" height="12" fill="#e0e0e0"/><rect x="96" y="60" width="12" height="12" fill="#bbbbbb"/><rect x="108" y="60" width="12" height="12" fill="#e8e8e8"/><rect x="0" y="72" width="12" height="12" fill="#e0e0e0"/><rect x="12" y="72" width="12" height="12" fill="#e0e0e0"/><rect x="24" y="72" width="12" height="12" fill="#e0e0e0"/><rect x="36" y="72" width="12" height="12" fill="#8cc0c0"/><rect x="48" y="72" width="12" height="12" fill="#4aaac8"/><rect x="60" y="72" width="12" height="12" fill="#4ab4e6"/><rect x="72" y="72" width="12" height="12" fill="#9adcf4"/><rect x="84" y="72" width="12" height="12" fill="#f0f0f0"/><rect x="96" y="72" width="12" height="12" fill="#e6e6e6"/><rect x="108" y="72" width="12" height="12" fill="#eeeeee"/><rect x="0" y="84" width="12" height="12" fill="#f4f4f4"/><rect x="12" y="84" width="12" height="12" fill="#cccccc"/><rect x="24" y="84" width="12" height="12" fill="#bbbbbb"/><rect x="36" y="84" width="12" height="12" fill="#e6e8e6"/><rect x="48" y="84" width="12" height="12" fill="#e6e6e6"/><rect x="60" y="84" width="12" height="12" fill="#f0f0f0"/><rect x="72" y="84" width="12" height="12" fill="#f0f0f0"/><rect x="84" y="84" width="12" height="12" fill="#d8d8d8"/><rect x="96" y="84" width="12" height="12" fill="#d8d8d8"/><rect x="108" y="84" width="12" height="12" fill="#e8e8e8"/><rect x="12" y="96" width="12" height="12" fill="#b0b0b0"/><rect x="24" y="96" width="12" height="12" fill="#c8c8c8"/><rect x="36" y="96" width="12" height="12" fill="#c8c8c8"/><rect x="48" y="96" width="12" height="12" fill="#e0e0e0"/><rect x="60" y="96" width="12" height="12" fill="#e0e0e0"/><rect x="72" y="96" width="12" height="12" fill="#c0c0c0"/><rect x="84" y="96" width="12" height="12" fill="#a0c8b4"/><rect x="96" y="96" width="12" height="12" fill="#88dcb0"/><rect x="108" y="96" width="12" height="12" fill="#e8f8f0"/><rect x="12" y="108" width="12" height="12" fill="#c0c0c0"/><rect x="24" y="108" width="12" height="12" fill="#c0c0c0"/><rect x="36" y="108" width="12" height="12" fill="#d0d0d0"/><rect x="48" y="108" width="12" height="12" fill="#c8c8c8"/><rect x="60" y="108" width="12" height="12" fill="#e0e0e0"/><rect x="72" y="108" width="12" height="12" fill="#e6e6e6"/><rect x="84" y="108" width="12" height="12" fill="#88dcb0"/><rect x="96" y="108" width="12" height="12" fill="#50d088"/><rect x="24" y="120" width="12" height="12" fill="#eeeeee"/><rect x="36" y="120" width="12" height="12" fill="#cccccc"/><rect x="48" y="120" width="12" height="12" fill="#eeeeee"/><rect x="60" y="120" width="12" height="12" fill="#eeeeee"/><rect x="72" y="120" width="12" height="12" fill="#d6d6d6"/><rect x="84" y="120" width="12" height="12" fill="#e8f4ee"/></g>
<clipPath id="qc2"><path d="M44 4 L66 0 L96 12 L116 30 L132 50 L128 80 L122 104 L104 124 L84 134 L56 136 L30 126 L12 110 L2 90 L-2 62 L4 36 L22 16 Z"/></clipPath>
<path d="M82 124 C92 126 100 120 102 110 L104 102 C104 112 96 122 84 122Z" fill="#0cbb55"/><path d="M84 122 C94 122 101 114 102 104" stroke="#0cbb55" stroke-width="4" fill="none"/>
<path d="M-1.5 56 L1 56.5 M-2 67.5 L2 67 M3 96 L6 94 M7 101 L9 104" stroke="#111" stroke-width="2"/>
<path d="M38 64 L44 60 L46 72 L38 76Z" fill="#fff"/><path d="M44 68 L40 70 L44 73" stroke="#1a6e6a" stroke-width="2" fill="none"/>
</svg>
  <div class="a" style="left:45px;top:276px;font-size:14px;line-height:21px;color:#707070;white-space:nowrap">门店、供应商、酒店、企业管理、区域代理等独立后台登录域名同总平台，使用<br>对应的店员账号密码即可，注意不能使用同一浏览器登录</div>
</div>
<!-- right 2 -->
<div class="pn" style="left:1305px;top:405px;width:580px;height:500px">
  <div class="bar" style="left:10px;top:21px"></div>
  <div class="ttl" style="left:25px;top:22px">提现动态</div>
<svg class="a" style="left:135px;top:185px" width="310" height="205" viewBox="0 0 310 205">
<defs>
<linearGradient id="hill" x1="0" y1="128" x2="0" y2="196" gradientUnits="userSpaceOnUse"><stop offset="0" stop-color="#aee8d6"/><stop offset="0.6" stop-color="#d8f4ec"/><stop offset="1" stop-color="#fff"/></linearGradient>
<linearGradient id="hillx" x1="4" y1="0" x2="306" y2="0" gradientUnits="userSpaceOnUse"><stop offset="0" stop-color="#fff"/><stop offset="0.2" stop-color="#fff" stop-opacity="0"/><stop offset="0.8" stop-color="#fff" stop-opacity="0"/><stop offset="1" stop-color="#fff"/></linearGradient>
<linearGradient id="cl" x1="0" y1="0" x2="0" y2="1"><stop offset="0" stop-color="#97dfca"/><stop offset="0.5" stop-color="#c7efe3"/><stop offset="1" stop-color="#fff" stop-opacity="0"/></linearGradient>
<linearGradient id="sh" x1="0" y1="0" x2="0" y2="1"><stop offset="0" stop-color="#78d6bd"/><stop offset="1" stop-color="#b4ead9" stop-opacity="0"/></linearGradient>
<radialGradient id="blur" cx="0.5" cy="0.5" r="0.5"><stop offset="0" stop-color="#8ee0c8"/><stop offset="1" stop-color="#fff" stop-opacity="0"/></radialGradient>
</defs>
<path d="M4 198 C35 158 95 128 155 128 C215 128 275 158 306 198Z" fill="url(#hill)"/>
<path d="M4 198 C35 158 95 128 155 128 C215 128 275 158 306 198Z" fill="url(#hillx)"/>
<!-- left cloud -->
<g fill="url(#cl)" opacity=".9"><path d="M25 145 C25 132 32 124 42 124 C44 116 52 111 60 111 C70 111 77 118 79 124 C90 122 103 128 103 145Z"/></g>
<!-- right top cloud -->
<g fill="url(#cl)"><path d="M206 48 C206 38 212 32 222 32 C224 22 232 17 240 17 C250 17 257 23 259 31 C272 31 281 36 281 48Z"/></g>
<!-- right mid cloud -->
<g fill="url(#cl)" opacity=".85"><path d="M234 110 C234 103 240 99 248 99 C250 92 256 88 263 88 C271 88 276 94 277 99 C287 99 294 103 294 110Z"/></g>
<!-- doc shadow -->
<path d="M120 132 H186 C200 134 215 140 225 147 C200 150 175 149 155 145 C140 142 128 138 120 132Z" fill="#9fe3cf" opacity=".5"/>
<!-- document -->
<rect x="118" y="50" width="68" height="84" rx="4" fill="#a8ecdc"/>
<path d="M118 54 C118 52 119 51 120 50.5 V132 C119 131 118 130 118 128Z" fill="#7fd8c2"/>
<path d="M123 55 H182 V84 C178 104 162 118 143 121 H123Z" fill="#fff"/>
<path d="M143 121 C162 118 178 104 182 84 C182 100 180 114 172 118 C165 121 155 122 143 121Z" fill="#7ddcc4"/>
<rect x="128" y="61" width="18" height="16" rx="1.5" fill="#8edac8"/>
<rect x="149" y="62" width="29" height="2.6" rx="1.3" fill="#8edac8"/>
<rect x="149" y="68" width="29" height="2.6" rx="1.3" fill="#8edac8"/>
<rect x="149" y="74" width="29" height="2.6" rx="1.3" fill="#8edac8"/>
<rect x="128" y="86" width="48" height="2.8" rx="1.4" fill="#8edac8"/>
<rect x="126" y="95" width="36" height="2.8" rx="1.4" fill="#8edac8"/>
<rect x="124" y="106" width="28" height="2.8" rx="1.4" fill="#8edac8"/>
<!-- left flying paper -->
<ellipse cx="92" cy="84" rx="14" ry="6" fill="url(#blur)"/>
<g transform="rotate(-22 93 73)"><rect x="81" y="64" width="24" height="18" rx="2" fill="#33c29a"/><path d="M85 69 H101 M85 73 H101 M85 77 H101" stroke="#e8fbf5" stroke-width="1.3"/></g>
<!-- top paper -->
<path d="M195 24 L208 28 L206 45 L208 49 L203 48 C199 44 196 36 195 24Z" fill="#33c29a"/><path d="M199 30 L206 32 M199 34 L206 36 M200 38 L206 40" stroke="#dff7ef" stroke-width="1"/>
<!-- left plant -->
<ellipse cx="62" cy="168" rx="12" ry="3.5" fill="url(#blur)"/>
<path d="M72 170 C70 155 70 140 73 127 C76 134 77 145 75 156 C79 150 84 146 92 143 C88 152 82 162 72 170Z" fill="#2ebf96"/>
<!-- right plant -->
<path d="M221 157 C212 152 204 140 203 130 C212 134 219 145 221 157Z" fill="#52cfae"/>
<path d="M221 157 C214 146 213 134 218 124 C224 134 225 146 221 157Z" fill="#2ebf96"/>
<path d="M221 157 C225 146 232 138 240 134 C240 145 232 154 221 157Z" fill="#6fd8bb"/>
<path d="M212 157.5 H232" stroke="#7fd8c2" stroke-width="1.2"/>
</svg>
  <div class="a" style="left:0;width:580px;text-align:center;top:400px;font-size:14px;line-height:20px;color:#777">暂无数据~</div>
</div>

<!-- scrollbar -->
<div class="a" style="left:1895px;top:0;width:25px;height:864px;background:#f1f1f1">
  <div class="a" style="left:2px;top:25px;width:21px;height:400px;background:#c1c1c1"></div>
  <svg class="a" style="left:6px;top:9px" width="12" height="8" viewBox="0 0 12 8"><path d="M0.5 7 L6 1 L11.5 7Z" fill="#a3a3a3"/></svg>
  <svg class="a" style="left:6px;top:847px" width="12" height="8" viewBox="0 0 12 8"><path d="M0.5 1 L6 7 L11.5 1Z" fill="#505050"/></svg>
</div>
</body></html>
